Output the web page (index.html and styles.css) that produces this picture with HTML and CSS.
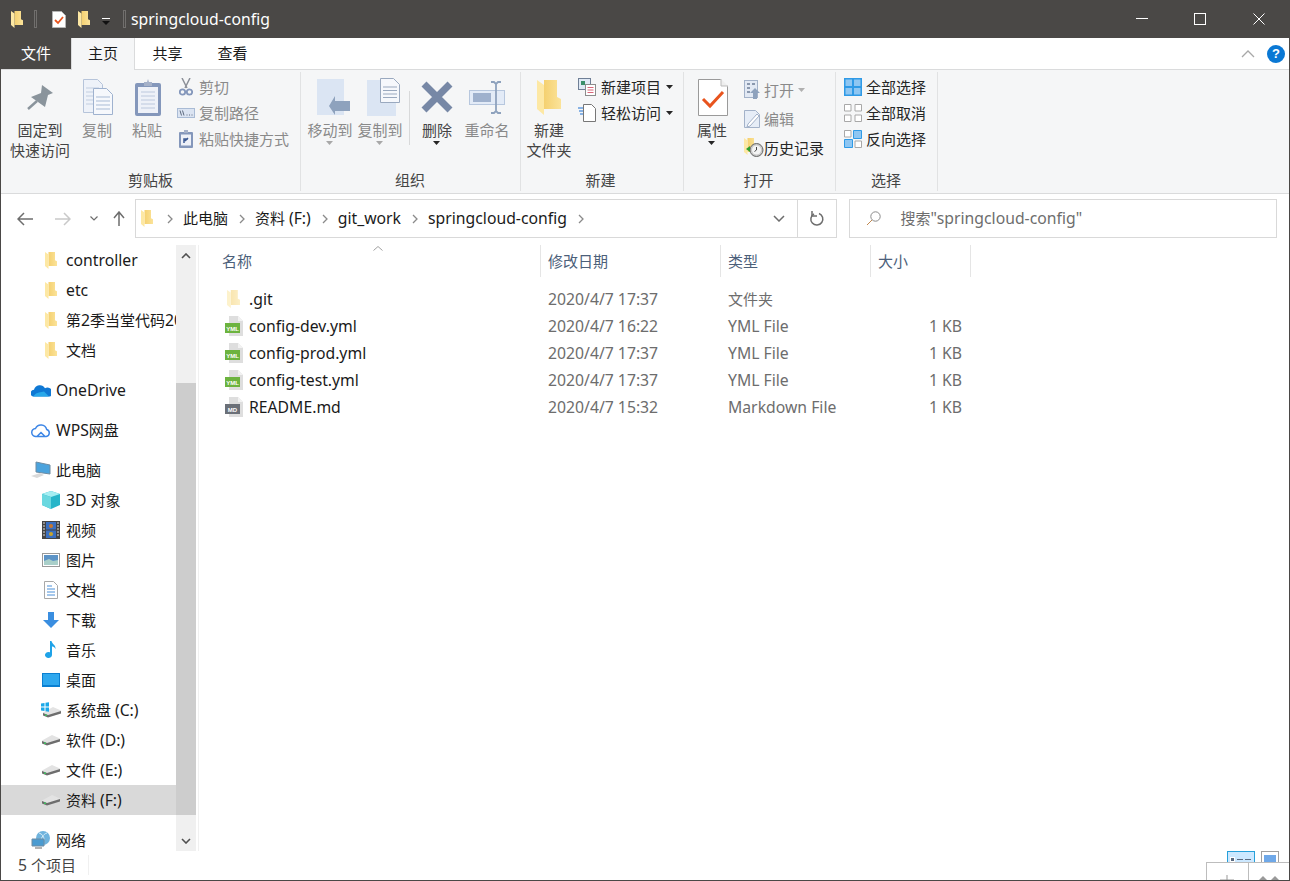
FILE: index.html
```html
<!DOCTYPE html>
<html lang="zh-CN">
<head>
<meta charset="utf-8">
<title>springcloud-config</title>
<link rel="stylesheet" href="styles.css">
</head>
<body>
<svg class="defs" width="0" height="0" aria-hidden="true">
  <defs>
    <linearGradient id="fg" x1="0" y1="0" x2="1" y2="0"><stop offset="0" stop-color="#f2c95f"/><stop offset="1" stop-color="#fbe39a"/></linearGradient>
    <symbol id="folder" viewBox="0 0 24 35" preserveAspectRatio="none">
      <path d="M0 0H20V17L24 19V29H7V0z" fill="url(#fg)"/>
      <path d="M0 0L7 5V35L0 29z" fill="#fde8a4"/>
    </symbol>
    <symbol id="file" viewBox="0 0 18 20">
      <path d="M4 0h9l5 5v15H4z" fill="#dedede"/><path d="M13 0l5 5h-5z" fill="#f2f2f2"/>
    </symbol>
    <symbol id="drive" viewBox="0 0 18 12">
      <path d="M0 6.500 10 1l8 3.500v3L5 11l-5-2z" fill="#e3e3e3"/><path d="M0 7l5 2 13-4v2.500L5 11.500 0 9.500z" fill="#6d6d6d"/><rect x="2" y="8.500" width="2" height="1.500" fill="#3fbf5f"/>
    </symbol>
    <symbol id="chev" viewBox="0 0 8 12"><path d="M2 2l4 4-4 4" fill="none" stroke="#8a8a8a" stroke-width="1.300"/></symbol>
    <symbol id="caret" viewBox="0 0 8 4"><path d="M0 0h7L3.500 4z"/></symbol>
  </defs>
</svg>
<div class="window">
  <header class="titlebar">
    <svg class="ic-folder-t"><use href="#folder"/></svg>
    <span class="qsep"></span>
    <svg class="ic-qcheck" viewBox="0 0 14 17"><path d="M.5.500h9l4 4v12H.5z" fill="#fff" stroke="#b5b5b5"/><path d="M3 9l3 3 5-6" fill="none" stroke="#e8541e" stroke-width="1.800"/></svg>
    <svg class="ic-folder-t"><use href="#folder"/></svg>
    <svg class="ic-qdrop" viewBox="0 0 8 7"><path d="M0 0h8v1H0z" fill="#fff"/><path d="M0 3h8L4 7z" fill="#111"/></svg>
    <span class="qsep"></span>
    <span class="title la">springcloud-config</span>
    <div class="winctl">
      <svg viewBox="0 0 12 12" class="ctl"><path d="M0 5.500h12" stroke="#fff" fill="none"/></svg>
      <svg viewBox="0 0 12 12" class="ctl"><rect x=".5" y=".5" width="11" height="11" stroke="#fff" fill="none"/></svg>
      <svg viewBox="0 0 12 12" class="ctl"><path d="M.5.500l11 11M11.500.500l-11 11" stroke="#fff" fill="none"/></svg>
    </div>
  </header>

  <nav class="tabs">
    <span class="tab tab-file">文件</span>
    <span class="tab tab-home">主页</span>
    <span class="tab tab-plain">共享</span>
    <span class="tab tab-plain">查看</span>
    <span class="tabs-end">
      <svg class="ic-collapse" viewBox="0 0 14 8"><path d="M1 7l6-6 6 6" fill="none" stroke="#a8a8a8" stroke-width="1.300"/></svg>
      <span class="help">?</span>
    </span>
  </nav>

  <section class="ribbon">
    <div class="group g1">
      <div class="gbody">
        <div class="big w60">
          <span class="bigicon"><svg width="26" height="26" viewBox="0 0 26 26"><path d="M15 1l11 8-5 2-3 12L4 13l10-4z" fill="#8a949c"/><path d="M10 17l-9 8" stroke="#8a949c" stroke-width="2.500"/></svg></span>
          <span class="lab">固定到<br>快速访问</span>
        </div>
        <div class="big w40 off">
          <span class="bigicon nudge2"><svg width="30" height="36" viewBox="0 0 30 36"><path d="M.5.500h14l5 5v28H.5z" fill="#eef2f9" stroke="#b6c4da"/><path d="M3 9h13M3 13h13M3 17h13M3 21h13M3 25h13" stroke="#c2cee0"/><path d="M10.500 9.500h13l6 6v20h-19z" fill="#f6f8fc" stroke="#9fb2cf"/><path d="M13 18h14M13 22h14M13 26h14M13 30h14" stroke="#a9bbd5"/></svg></span>
          <span class="lab">复制</span>
        </div>
        <div class="big w46 off">
          <span class="bigicon nudge2"><svg width="26" height="37" viewBox="0 0 26 37"><rect x="0" y="4" width="26" height="33" rx="2" fill="#8497bb"/><rect x="3" y="8" width="20" height="26" fill="#eef1f8"/><path d="M6 13h14M6 17h14M6 21h14M6 25h14M6 29h14" stroke="#bcc8dd"/><path d="M9 7V3h3l1-3 1 3h3v4z" fill="#a5b1c9"/></svg></span>
          <span class="lab">粘贴</span>
        </div>
        <div class="smalls s26 m2">
          <div class="small off"><svg class="i16" viewBox="0 0 14 18" width="14" height="18"><path d="M3 0l5 10M11 0L6 10" stroke="#8c9098" stroke-width="1.500" fill="none"/><circle cx="3.500" cy="14" r="2.700" fill="none" stroke="#8497bb" stroke-width="1.800"/><circle cx="10.500" cy="14" r="2.700" fill="none" stroke="#8497bb" stroke-width="1.800"/></svg><span>剪切</span></div>
          <div class="small off"><svg class="i16" viewBox="0 0 18 10" width="18" height="10"><rect x=".5" y=".5" width="17" height="9" fill="#dbe4f2" stroke="#a9bbd5"/><path d="M3 2.500l1.500 5M5.500 2.500l1.500 5" stroke="#5e6b80" fill="none"/><path d="M9.500 7h1M12 7h1M14.500 7h1" stroke="#5e6b80"/></svg><span>复制路径</span></div>
          <div class="small off"><svg class="i16" viewBox="0 0 14 18" width="14" height="18"><rect y="2" width="14" height="16" rx="1" fill="#8497bb"/><rect x="2" y="4.500" width="10" height="11" fill="#eef1f8"/><path d="M5 0h4v3H5z" fill="#a5b1c9"/><path d="M5 13V9h4M6 11l3-3" stroke="#3c5a94" stroke-width="1.500" fill="none"/></svg><span>粘贴快捷方式</span></div>
        </div>
      </div>
      <div class="glabel">剪贴板</div>
    </div>

    <div class="group g2">
      <div class="gbody">
        <div class="big w48 off">
          <span class="bigicon nudge7"><svg width="33" height="36" viewBox="0 0 33 36"><path d="M0 0h27v36H0z" fill="#dbe5f3"/><path d="M12 27l6-10v5h15v10H18v4z" fill="#8ea2bd"/></svg></span>
          <span class="lab">移动到</span><svg class="caret gray"><use href="#caret"/></svg>
        </div>
        <div class="big w48 off g-ml2">
          <span class="bigicon nudge7"><svg width="33" height="38" viewBox="0 0 33 38"><path d="M0 2h29v36H0z" fill="#dbe5f3"/><path d="M13.500.500h13l6 6v18h-19z" fill="#f6f8fc" stroke="#9aa9bf"/><path d="M16 9h14M16 12.500h14M16 16h14M16 19.500h14" stroke="#9aa9bf"/></svg></span>
          <span class="lab">复制到</span><svg class="caret gray"><use href="#caret"/></svg>
        </div>
        <span class="rsep"></span>
        <div class="big w36 ml9">
          <span class="bigicon"><svg width="32" height="32" viewBox="0 0 32 32"><path d="M3 3l26 26M29 3 3 29" stroke="#7788a6" stroke-width="7"/></svg></span>
          <span class="lab">删除</span><svg class="caret"><use href="#caret"/></svg>
        </div>
        <div class="big w46 ml9 off">
          <span class="bigicon"><svg width="36" height="33" viewBox="0 0 36 33"><rect x=".5" y="9.500" width="35" height="14" fill="#e3ebf7" stroke="#b7c7de"/><rect x="4" y="12" width="18" height="9" fill="#9fb1cd"/><path d="M22 1h3l2 2 2-2h3M22 32h3l2-2 2 2h3M27 3v27" fill="none" stroke="#8ea2bd" stroke-width="1.800"/></svg></span>
          <span class="lab">重命名</span>
        </div>
      </div>
      <div class="glabel">组织</div>
    </div>

    <div class="group g3">
      <div class="gbody">
        <div class="big w48">
          <span class="bigicon"><svg width="24" height="35"><use href="#folder"/></svg></span>
          <span class="lab">新建<br>文件夹</span>
        </div>
        <div class="smalls s26 m2">
          <div class="small wide"><svg viewBox="0 0 18 18" width="18" height="18"><rect x=".5" y=".5" width="12" height="11" fill="#dfe9f5" stroke="#6f7f96"/><rect x="3" y="3" width="4" height="4" fill="#3a8f6a"/><rect x="7.500" y="6.500" width="10" height="11" fill="#fff" stroke="#8c8c8c"/><path d="M9.500 9.500h6M9.500 12h6M9.500 14.500h6" stroke="#d9667a"/></svg><span>新建项目</span><svg class="caret-i"><use href="#caret"/></svg></div>
          <div class="small wide"><svg viewBox="0 0 18 18" width="18" height="18"><path d="M5.500.500h8l4 4v13h-12z" fill="#fff" stroke="#777"/><path d="M0 4h5M1 7h4M2 10h3" stroke="#1d6fd1" stroke-width="1.200"/></svg><span>轻松访问</span><svg class="caret-i"><use href="#caret"/></svg></div>
        </div>
      </div>
      <div class="glabel">新建</div>
    </div>

    <div class="group g4">
      <div class="gbody">
        <div class="big w40">
          <span class="bigicon nudge2"><svg width="30" height="37" viewBox="0 0 30 37"><path d="M.5.500h22l7 7v29H.5z" fill="#fff" stroke="#9a9a9a"/><path d="M23 0v7h7" fill="#eee" stroke="#bbb"/><path d="M5 20l7 7 13-14" fill="none" stroke="#e8541e" stroke-width="3"/></svg></span>
          <span class="lab">属性</span><svg class="caret"><use href="#caret"/></svg>
        </div>
        <div class="smalls s29 m3 ml12">
          <div class="small off"><svg viewBox="0 0 16 19" width="16" height="19"><rect x=".5" y=".5" width="13" height="17" fill="#e2e9f4" stroke="#a3b2c9"/><path d="M3 4h3M3 8h3M3 12h3M8 4h3" stroke="#6d7d96" stroke-width="1.500"/><path d="M6 13l5-5 5 5h-3v6H9v-6z" fill="#8ea2bd"/></svg><span>打开</span><svg class="caret-i gray"><use href="#caret"/></svg></div>
          <div class="small off"><svg viewBox="0 0 16 18" width="16" height="18"><path d="M.5.500h11l4 4v13H.5z" fill="#e6edf7" stroke="#a3b2c9"/><path d="M4 14l9-10 2 2-9 10-3 1z" fill="#fff" stroke="#a3b2c9"/></svg><span>编辑</span></div>
          <div class="small"><svg viewBox="0 0 20 19" width="20" height="19"><use href="#folder" width="12" height="17"/><circle cx="12.500" cy="12" r="6.500" fill="#c9c9c9" stroke="#666"/><circle cx="12.500" cy="12" r="4.500" fill="#f4f4f4"/><path d="M12.500 9v3l-2 1.500" stroke="#444" fill="none"/><path d="M2 11l4-3v6z" fill="#2ea02e"/></svg><span class="hist">历史记录</span></div>
        </div>
      </div>
      <div class="glabel">打开</div>
    </div>

    <div class="group g5">
      <div class="gbody">
        <div class="smalls s26 m2">
          <div class="small"><svg viewBox="0 0 18 18" width="18" height="18"><path d="M0 0h18v18H0z" fill="#2f9ae6"/><path d="M1.500 1.500h6.500v6.500H1.500zM10 1.500h6.500v6.500H10zM1.500 10h6.500v6.500H1.500zM10 10h6.500v6.500H10z" fill="#8ec6f2"/></svg><span>全部选择</span></div>
          <div class="small"><svg viewBox="0 0 18 18" width="18" height="18"><path d="M.5.500h6.500v6.500H.5zM11 .5h6.500v6.500H11zM.5 11h6.500v6.500H.5zM11 11h6.500v6.500H11z" fill="#fff" stroke="#a8a8a8"/></svg><span>全部取消</span></div>
          <div class="small"><svg viewBox="0 0 18 18" width="18" height="18"><path d="M.5.500h6.500v6.500H.5zM11 11h6.500v6.500H11z" fill="#fff" stroke="#a8a8a8"/><path d="M9.500.500h8v8h-8zM.5 9.500h8v8h-8z" fill="#8ec6f2" stroke="#2f9ae6"/></svg><span>反向选择</span></div>
        </div>
      </div>
      <div class="glabel">选择</div>
    </div>
  </section>

  <div class="addrrow">
    <svg class="navbtn" viewBox="0 0 16 14" width="16" height="14"><path d="M7 1 1 7l6 6M1 7h15" fill="none" stroke="#6d6d6d" stroke-width="1.500"/></svg>
    <svg class="navbtn fwd" viewBox="0 0 16 14" width="16" height="14"><path d="M9 1l6 6-6 6M15 7H0" fill="none" stroke="#c9c9c9" stroke-width="1.500"/></svg>
    <svg class="navbtn down" viewBox="0 0 8 5" width="8" height="5"><path d="M.5.500 4 4 7.500.500" fill="none" stroke="#6d6d6d" stroke-width="1.200"/></svg>
    <svg class="navbtn up" viewBox="0 0 12 15" width="12" height="15"><path d="M1 7l5-6 5 6M6 1v14" fill="none" stroke="#6d6d6d" stroke-width="1.500"/></svg>
    <div class="addr">
      <svg class="addr-folder"><use href="#folder"/></svg>
      <svg class="crumbchev"><use href="#chev"/></svg><span class="crumb">此电脑</span>
      <svg class="crumbchev"><use href="#chev"/></svg><span class="crumb">资料 <span class="la">(F:)</span></span>
      <svg class="crumbchev"><use href="#chev"/></svg><span class="crumb la">git_work</span>
      <svg class="crumbchev"><use href="#chev"/></svg><span class="crumb la">springcloud-config</span>
      <svg class="crumbchev"><use href="#chev"/></svg>
      <span class="addr-end">
        <svg class="addr-drop" viewBox="0 0 12 7" width="12" height="7"><path d="M1 1l5 5 5-5" fill="none" stroke="#6d6d6d" stroke-width="1.500"/></svg>
        <span class="refresh"><svg viewBox="0 0 16 16" width="16" height="16"><path d="M10 2.500a6 6 0 1 1-5 .3" fill="none" stroke="#6d6d6d" stroke-width="1.500"/><path d="M3 0v5h5" fill="none" stroke="#6d6d6d" stroke-width="1.500"/></svg></span>
      </span>
    </div>
    <div class="search">
      <svg viewBox="0 0 15 15" width="15" height="15"><circle cx="9.500" cy="5.500" r="4.700" fill="none" stroke="#8a8a8a"/><path d="M6 9l-5 5" stroke="#c08850"/></svg>
      <span>搜索<span class="la">"springcloud-config"</span></span>
    </div>
  </div>

  <main class="main">
    <div class="nav">
      <div class="navrow l1"><span class="ni"><svg class="nf"><use href="#folder"/></svg></span><span class="nt la">controller</span></div>
      <div class="navrow l1"><span class="ni"><svg class="nf"><use href="#folder"/></svg></span><span class="nt la">etc</span></div>
      <div class="navrow l1"><span class="ni"><svg class="nf"><use href="#folder"/></svg></span><span class="nt">第<span class="la">2</span>季当堂代码<span class="la">2020</span></span></div>
      <div class="navrow l1"><span class="ni"><svg class="nf"><use href="#folder"/></svg></span><span class="nt">文档</span></div>
      <div class="navrow l0 gaptop"><span class="ni"><svg viewBox="0 0 20 13" width="20" height="13"><path d="M2 12.500a3.500 3.500 0 0 1 1-6.800 6 6 0 0 1 11-1.500 4.500 4.500 0 0 1 5 8.300z" fill="#0f78d4"/><path d="M2 12.500h16l-5-5-5 1-3 1z" fill="#28a8ea"/></svg></span><span class="nt la">OneDrive</span></div>
      <div class="navrow l0 gaptop"><span class="ni"><svg viewBox="0 0 20 16" width="20" height="16"><path d="M5 14.500a4 4 0 0 1-.5-8 6 6 0 0 1 11.200 1 3.600 3.600 0 0 1-.5 7zM6 14.500l4-4 4 4" fill="none" stroke="#3d86e6" stroke-width="1.500"/></svg></span><span class="nt"><span class="la">WPS</span>网盘</span></div>
      <div class="navrow l0 gaptop"><span class="ni"><svg viewBox="0 0 20 18" width="20" height="18"><path d="M5 1l14 3v9L5 11z" fill="#4ba3dd" stroke="#6e8ca3"/><path d="M0 15l9-3 4 2-7 3z" fill="#d9d9d9"/></svg></span><span class="nt">此电脑</span></div>
      <div class="navrow l1"><span class="ni"><svg viewBox="0 0 18 18" width="18" height="18"><path d="M9 0l9 3v11l-9 4-9-4V3z" fill="#27b5c9"/><path d="M9 0l9 3-9 3-9-3z" fill="#a5eef2"/><path d="M0 3l9 3v12l-9-4z" fill="#6ad8e0"/></svg></span><span class="nt"><span class="la">3D</span> 对象</span></div>
      <div class="navrow l1"><span class="ni"><svg viewBox="0 0 18 18" width="18" height="18"><rect width="18" height="18" fill="#444"/><path d="M1 2h2M1 5h2M1 8h2M1 11h2M1 14h2M15 2h2M15 5h2M15 8h2M15 11h2M15 14h2" stroke="#ddd"/><rect x="4" y="1" width="10" height="7.500" fill="#3a6fc0"/><rect x="4" y="9.500" width="10" height="7.500" fill="#3a6fc0"/><circle cx="9" cy="5" r="2" fill="#c9762c"/><circle cx="9" cy="13" r="2" fill="#c9a52c"/></svg></span><span class="nt">视频</span></div>
      <div class="navrow l1"><span class="ni"><svg viewBox="0 0 18 14" width="18" height="14"><rect x=".5" y=".5" width="17" height="13" fill="#fff" stroke="#9a9a9a"/><rect x="2" y="2" width="14" height="10" fill="#5c93c6"/><path d="M2 8l5-2 4 2 5-1v5H2z" fill="#a9cfc9"/></svg></span><span class="nt">图片</span></div>
      <div class="navrow l1"><span class="ni"><svg viewBox="0 0 14 18" width="14" height="18"><path d="M.5.500h9l4 4v13H.5z" fill="#fff" stroke="#a8a8a8"/><path d="M3 5h5M3 8h8M3 11h8M3 14h8" stroke="#4a90d9"/></svg></span><span class="nt">文档</span></div>
      <div class="navrow l1"><span class="ni"><svg viewBox="0 0 16 16" width="16" height="16"><path d="M5 0h6v8h5l-8 8-8-8h5z" fill="#3a8ee0"/></svg></span><span class="nt">下载</span></div>
      <div class="navrow l1"><span class="ni"><svg viewBox="0 0 12 18" width="12" height="18"><path d="M5 0h1.500c.5 3 4.500 4 4 8-1-2-2.500-2.500-3.500-2.500V14a3.500 3 0 1 1-2-2.700z" fill="#1fa3e8"/></svg></span><span class="nt">音乐</span></div>
      <div class="navrow l1"><span class="ni"><svg viewBox="0 0 18 14" width="18" height="14"><rect width="18" height="14" fill="#0a7fd1"/><rect x="1" y="1" width="16" height="11" fill="#2fa8ee"/></svg></span><span class="nt">桌面</span></div>
      <div class="navrow l1"><span class="ni"><svg viewBox="0 0 20 16" width="20" height="16"><use href="#drive" x="2" y="4" width="18" height="12"/><path d="M0 1.500 3.500 1v3.500H0zM4.500.8 8 .3v4.200H4.500zM0 5.500h3.500V9L0 8.500zM4.500 5.500H8V9.700l-3.500-.5z" fill="#1ba8e8"/></svg></span><span class="nt">系统盘 <span class="la">(C:)</span></span></div>
      <div class="navrow l1"><span class="ni"><svg width="18" height="12"><use href="#drive"/></svg></span><span class="nt">软件 <span class="la">(D:)</span></span></div>
      <div class="navrow l1"><span class="ni"><svg width="18" height="12"><use href="#drive"/></svg></span><span class="nt">文件 <span class="la">(E:)</span></span></div>
      <div class="navrow l1 sel"><span class="ni"><svg width="18" height="12"><use href="#drive"/></svg></span><span class="nt">资料 <span class="la">(F:)</span></span></div>
      <div class="navrow l0 gaptop"><span class="ni"><svg viewBox="0 0 20 18" width="20" height="18"><circle cx="12" cy="7" r="7" fill="#6fb3dd"/><path d="M8 2c3 1 5 3 5 7M16 2c-4 1-7 6-6 11" stroke="#d7ecf7" fill="none"/><path d="M1 8h12v7H1z" fill="#4a9bd1" stroke="#6e8ca3"/><path d="M4 17h7" stroke="#999" stroke-width="1.500"/></svg></span><span class="nt">网络</span></div>
    </div>
    <div class="vscroll">
      <span class="sbtn"><svg viewBox="0 0 10 6" width="10" height="6"><path d="M1 5l4-4 4 4" fill="none" stroke="#505050" stroke-width="1.600"/></svg></span>
      <span class="strack"><span class="sthumb"></span></span>
      <span class="sbtn"><svg viewBox="0 0 10 6" width="10" height="6"><path d="M1 1l4 4 4-4" fill="none" stroke="#505050" stroke-width="1.600"/></svg></span>
    </div>
    <div class="list">
      <svg class="sortarrow" viewBox="0 0 10 5" width="10" height="5"><path d="M.5 4.500 5 .5l4.500 4" fill="none" stroke="#a0a0a0"/></svg>
      <div class="lrow lhead">
        <span>名称</span><span>修改日期</span><span>类型</span><span>大小</span>
      </div>
      <div class="lbody">
        <div class="lrow">
          <span class="fname"><svg class="fi hidden-folder"><use href="#folder"/></svg><span class="la">.git</span></span><span class="la">2020/4/7 17:37</span><span>文件夹</span><span></span>
        </div>
        <div class="lrow">
          <span class="fname"><svg class="fi" viewBox="0 0 18 20" width="18" height="20"><use href="#file"/><rect y="7" width="15" height="10" fill="#6cb33f"/><text x="7.500" y="14.500" class="ftag">YML</text></svg><span class="la">config-dev.yml</span></span><span class="la">2020/4/7 16:22</span><span class="la">YML File</span><span class="la">1 KB</span>
        </div>
        <div class="lrow">
          <span class="fname"><svg class="fi" viewBox="0 0 18 20" width="18" height="20"><use href="#file"/><rect y="7" width="15" height="10" fill="#6cb33f"/><text x="7.500" y="14.500" class="ftag">YML</text></svg><span class="la">config-prod.yml</span></span><span class="la">2020/4/7 17:37</span><span class="la">YML File</span><span class="la">1 KB</span>
        </div>
        <div class="lrow">
          <span class="fname"><svg class="fi" viewBox="0 0 18 20" width="18" height="20"><use href="#file"/><rect y="7" width="15" height="10" fill="#6cb33f"/><text x="7.500" y="14.500" class="ftag">YML</text></svg><span class="la">config-test.yml</span></span><span class="la">2020/4/7 17:37</span><span class="la">YML File</span><span class="la">1 KB</span>
        </div>
        <div class="lrow">
          <span class="fname"><svg class="fi" viewBox="0 0 18 20" width="18" height="20"><use href="#file"/><rect y="7" width="15" height="10" fill="#6b7078"/><text x="7.500" y="14.500" class="ftag">MD</text></svg><span class="la">README.md</span></span><span class="la">2020/4/7 15:32</span><span class="la">Markdown File</span><span class="la">1 KB</span>
        </div>
      </div>
    </div>
  </main>

  <footer class="status">
    <span class="count"><span class="la">5</span> 个项目</span>
    <span class="viewbtns">
      <span class="vb active"><i class="vb-dot"></i><i class="vb-line"></i><i class="vb-line"></i></span>
      <span class="vb"><i class="vb-img"></i></span>
    </span>
  </footer>

  <div class="popup">
    <span class="pop-cell"><svg viewBox="0 0 14 6" width="14" height="6"><path d="M7 0v6M0 5h14" stroke="#999"/></svg></span>
    <span class="pop-cell"><svg viewBox="0 0 24 6" width="24" height="6"><path d="M1 6l5-5 5 5zM13 6l5-5 5 5z" fill="#999"/></svg></span>
  </div>
</div>
</body>
</html>
```

FILE: styles.css
```css
* { box-sizing: border-box; }
html, body { margin: 0; padding: 0; height: 100%; overflow: hidden; background: #fff; }
body { font: 15px/20px "Noto Sans", "Noto Sans CJK SC", sans-serif; color: #1a1a1a; }
.defs { position: absolute; }
svg { display: block; flex: none; }
.la { font-size: 15.75px; }

.window { position: relative; width: 1290px; height: 881px; border: 1px solid #4a4846; border-top: 0; display: flex; flex-direction: column; overflow: hidden; }

.titlebar { height: 38px; background: #4a4846; display: flex; align-items: center; flex: none; margin: 0 -1px; padding-left: 11px; }
.ic-folder-t { width: 12px; height: 17px; }
.qsep { width: 3px; height: 18px; border: 1px solid #716f6d; margin: 0 15px 0 11px; }
.ic-qcheck { width: 14px; height: 17px; margin-right: 12px; }
.ic-qdrop { width: 8px; height: 7px; margin: 5px 2px 0 12px; }
.title { color: #fff; margin-left: -10px; }
.winctl { margin-left: auto; display: flex; align-items: center; }
.ctl { width: 12px; height: 12px; overflow: visible; }
.winctl .ctl:nth-child(1) { margin-right: 46px; }
.winctl .ctl:nth-child(2) { margin-right: 47px; }
.winctl .ctl:nth-child(3) { margin-right: 25px; }

.tabs { height: 32px; flex: none; display: flex; background: #fff; border-bottom: 1px solid #dadbdc; }
.tab { display: flex; align-items: center; justify-content: center; height: 31px; padding-bottom: 2px; }
.tab-file { width: 70px; background: #4a4846; color: #fff; }
.tab-home { width: 64px; height: 32px; background: #f5f6f7; border: 1px solid #dadbdc; border-bottom: 0; border-top: 0; padding-bottom: 3px; }
.tab-plain { width: 65px; }
.tabs-end { margin-left: auto; display: flex; align-items: center; padding-right: 4px; }
.ic-collapse { width: 14px; height: 8px; margin-right: 12px; }
.help { width: 18px; height: 18px; border-radius: 50%; background: #0a78d4; color: #fff; font: bold 13px/18px "Liberation Sans", sans-serif; text-align: center; }

.ribbon { height: 124px; flex: none; display: flex; background: #f5f6f7; border-bottom: 1px solid #dadbdc; }
.group { display: flex; flex-direction: column; border-right: 1px solid #e1e2e3; margin: 2px 0; }
.g1 { width: 300px; padding-left: 9px; }
.g2 { width: 220px; padding-left: 5px; }
.g3 { width: 163px; padding-left: 4px; }
.g4 { width: 152px; padding-left: 8px; }
.g5 { width: 102px; padding-left: 8px; }
.gbody { flex: 1; display: flex; }
.g1 .gbody { gap: 7px; }
.g3 .gbody { gap: 5px; }
.glabel { text-align: center; height: 20px; margin-bottom: 1px; color: #444; }
.g1 .glabel { margin-left: -9px; }
.g2 .glabel { margin-left: -5px; margin-right: 1px; }
.g3 .glabel { margin-left: -4px; margin-right: 3px; }
.g4 .glabel { margin-left: -8px; margin-right: 2px; }
.g5 .glabel { margin-left: -8px; margin-right: 1px; }

.big { display: flex; flex-direction: column; align-items: center; color: #444; }
.bigicon { height: 46px; margin-top: 2px; width: 100%; display: flex; align-items: center; justify-content: center; }
.nudge2 { padding-left: 2px; }
.nudge7 { padding-left: 7px; }
.lab { text-align: center; white-space: nowrap; }
.w60 { width: 60px; } .w40 { width: 40px; } .w46 { width: 46px; } .w48 { width: 48px; } .w36 { width: 36px; }
.g-ml2 { margin-left: 2px; }
.ml9 { margin-left: 9px; } .ml12 { margin-left: 12px; }
.rsep { width: 1px; height: 54px; margin: 19px 0 0 5px; background: #d8d9da; }
.big.off { color: #8a8a8a; }
.caret { width: 8px; height: 4px; margin-top: 1px; fill: #262626; }
.caret.gray { fill: #a8a8a8; }
.caret-i { width: 8px; height: 4px; fill: #262626; }
.caret-i.gray { fill: #b0b0b0; }

.smalls { display: flex; flex-direction: column; }
.m2 { margin-top: 2px; } .m3 { margin-top: 3px; }
.s26 .small { height: 26px; } .s29 .small { height: 29px; }
.small { display: flex; align-items: center; gap: 5px; white-space: nowrap; color: #262626; }
.small.off { color: #8a8a8a; }
.g1 .small { gap: 4px; }
.g1 .small > svg:first-child { margin: 0 2px; }
.g1 .small:nth-child(2) > svg:first-child { margin: 0; }
.g5 .small { gap: 4px; }
.g4 .small { gap: 4px; }
.hist { margin-left: -4px; }

.addrrow { height: 44px; flex: none; display: flex; align-items: center; padding-right: 12px; background: #fff; }
.navbtn { margin-top: 5px; }
.navbtn:nth-child(1) { margin-left: 16px; }
.fwd { margin-left: 22px; }
.down { margin-left: 19px; }
.up { margin-left: 15px; }
.addr { width: 703px; height: 39px; margin-left: 10px; margin-top: 5px; border: 1px solid #d9d9d9; display: flex; align-items: center; padding-left: 5px; }
.addr-folder { width: 12px; height: 17px; margin-right: 13px; }
.crumbchev { width: 8px; height: 12px; }
.crumb { margin: 0 10px 0 9px; padding-bottom: 1px; }
.addr-end { margin-left: auto; display: flex; align-items: center; height: 100%; }
.addr-drop { margin-right: 12px; }
.refresh { width: 39px; height: 100%; border-left: 1px solid #d9d9d9; display: flex; align-items: center; justify-content: center; }
.search { width: 428px; height: 39px; margin-left: 12px; margin-top: 5px; border: 1px solid #d9d9d9; display: flex; align-items: center; padding-left: 16px; gap: 19px; color: #6d6d6d; }
.search > span { padding-bottom: 1px; }

.main { flex: 1; min-height: 0; display: flex; padding-top: 7px; background: #fff; }
.nav { width: 175px; flex: none; overflow: hidden; }
.navrow { height: 30px; display: flex; align-items: center; gap: 5px; white-space: nowrap; overflow: hidden; }
.l0 { padding-left: 30px; } .l1 { padding-left: 40px; }
.gaptop { margin-top: 10px; }
.ni { width: 20px; flex: none; display: flex; justify-content: center; align-items: center; }
.nf { width: 12px; height: 17px; }
.sel { background: #d9d9d9; }

.vscroll { width: 20px; flex: none; background: #f0f0f0; display: flex; flex-direction: column; align-items: stretch; }
.sbtn { height: 21px; flex: none; display: flex; align-items: center; justify-content: center; }
.strack { flex: 1; display: flex; flex-direction: column; justify-content: flex-end; padding-bottom: 15px; }
.sthumb { height: 432px; background: #cdcdcd; }

.list { position: relative; flex: 1; margin-left: 2px; border-left: 1px solid #f0f0f0; padding-left: 15px; }
.sortarrow { position: absolute; left: 174px; top: 1px; }
.lrow { display: grid; grid-template-columns: 327px 180px 150px 100px; height: 27px; align-items: center; color: #6d6d6d; }
.lrow > span { padding-left: 7px; white-space: nowrap; }
.lrow > span:first-child { color: #1a1a1a; display: flex; align-items: center; }
.lrow > span:last-child { text-align: right; padding: 0 9px 0 0; }
.lhead { height: 32px; color: #4c607a; }
.lhead > span { height: 100%; display: flex; align-items: center; border-right: 1px solid #e5e5e5; }
.lhead > span:first-child { color: #4c607a; padding-left: 8px; }
.lhead > span:last-child { text-align: left; justify-content: flex-start; padding: 0 0 0 7px; }
.lbody { margin-top: 8px; }
.fname { gap: 6px; padding-left: 11px !important; }
.fi { width: 18px; }
.hidden-folder { opacity: .55; margin: 0 3px 0 2px; width: 13px; height: 18px; }
.ftag { font: bold 6px "Liberation Sans", sans-serif; fill: #fff; text-anchor: middle; }

.status { height: 29px; flex: none; display: flex; align-items: center; background: #fff; padding-left: 17px; position: relative; color: #444; }
.count { width: 71px; border-right: 1px solid #f0f0f0; margin-top: -2px; }
.viewbtns { margin-left: auto; display: flex; align-items: flex-start; gap: 6px; align-self: flex-start; padding-right: 10px; }
.vb { width: 18px; height: 20px; border: 1px solid #a0a0a0; border-bottom: 0; display: flex; align-items: flex-start; padding: 3px 2px 0; gap: 2px; }
.vb.active { width: 28px; background: #cce8ff; border: 1px solid #26a0da; }
.vb-dot { width: 5px; height: 5px; background: #5a6a80; border: 1px solid #fff; margin-top: 2px; }
.vb-line { width: 6px; height: 1px; background: #5a6a80; margin-top: 4px; }
.vb-img { width: 14px; height: 8px; background: #6fa8e8; }

.popup { position: absolute; right: -1px; bottom: -1px; width: 84px; height: 19px; background: #fff; border: 1px solid #bdbdbd; border-right: 0; border-bottom: 0; display: flex; }
.pop-cell { width: 42px; height: 100%; border-right: 1px solid #bdbdbd; display: flex; align-items: flex-end; justify-content: center; }
.pop-cell:last-child { border-right: 0; }
```
